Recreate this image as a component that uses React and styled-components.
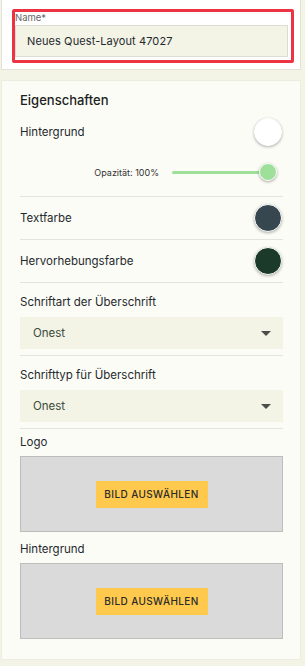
import React from "react";
import styled, { createGlobalStyle } from "styled-components";

const GlobalStyle = createGlobalStyle`
  body {
    margin: 0;
    background: #f3f3e6;
    font-family: "Inter", "Noto Sans", sans-serif;
    color: #1f2a2e;
  }
`;

const Page = styled.div`
  width: 300px;
  margin-left: 1px;
  display: flex;
  flex-direction: column;
  gap: 10px;
  padding-bottom: 8px;
`;

const NameCard = styled.div`
  background: #ffffff;
  border: 1px solid #e2e2da;
  border-top: none;
  padding: 9px 6px 6px 10px;
`;

const Highlight = styled.div`
  border: 3px solid #ec3344;
  border-radius: 2px;
  padding: 0 3px 3px 0;
`;

const FieldLabel = styled.div`
  font-size: 9.5px;
  color: #666;
  line-height: 12px;
  margin-bottom: 1px;
`;

const NameInput = styled.div`
  background: #f3f3e6;
  border: 1px solid #dcdcd2;
  height: 30px;
  display: flex;
  align-items: center;
  padding-left: 11px;
  font-size: 11px;
  letter-spacing: 0.1px;
  color: #1f2a2e;
`;

const PropsCard = styled.div`
  background: #fcfcf6;
  border: 1px solid #ecece0;
  padding: 11px 17px 20px 18px;
`;

const Title = styled.div`
  font-size: 13px;
  font-weight: 500;
  line-height: 16px;
  color: #1b1f22;
  margin-bottom: 10px;
`;

const Row = styled.div`
  display: flex;
  align-items: center;
  justify-content: space-between;
  height: ${(p) => p.h || 42}px;
  border-bottom: ${(p) => (p.noLine ? "none" : "1px solid #e4e4dc")};
`;

const Label = styled.div`
  font-size: 11.5px;
  line-height: 14px;
  color: #1f2a2e;
`;

const Swatch = styled.div`
  width: 26px;
  height: 26px;
  border-radius: 50%;
  background: ${(p) => p.color};
  border: 1.5px solid #ffffff;
  box-shadow: 0 1px 3px rgba(0, 0, 0, 0.3);
  margin-right: 1px;
`;

const OpacityRow = styled.div`
  display: flex;
  align-items: center;
  justify-content: flex-end;
  gap: 13px;
  height: 48px;
  padding-top: 2px;
  border-bottom: 1px solid #e4e4dc;
`;

const OpacityText = styled.span`
  font-size: 9px;
  color: #333;
`;

const Track = styled.div`
  position: relative;
  width: 96px;
  height: 3px;
  background: #9ee09a;
  border-radius: 2px;
  margin-right: 15px;
`;

const Thumb = styled.div`
  position: absolute;
  right: -9px;
  top: -8px;
  width: 16px;
  height: 16px;
  border-radius: 50%;
  background: #9ee09a;
  border: 1.5px solid #ffffff;
  box-shadow: 0 1px 3px rgba(0, 0, 0, 0.35);
`;

const Group = styled.div`
  padding: ${(p) => p.pad || "12px 0 6px"};
  border-bottom: ${(p) => (p.noLine ? "none" : "1px solid #e4e4dc")};
`;

const GroupLabel = styled(Label)`
  margin-bottom: ${(p) => p.gap || 8}px;
`;

const Select = styled.div`
  background: #f3f3e6;
  height: 32px;
  display: flex;
  align-items: center;
  justify-content: space-between;
  padding: 0 12px 0 13px;
  font-size: 11.5px;
  color: #3b4b3c;
`;

const Caret = styled.span`
  width: 0;
  height: 0;
  border-left: 5px solid transparent;
  border-right: 5px solid transparent;
  border-top: 5px solid #4a4f4a;
`;

const ImageBox = styled.div`
  background: #dadada;
  border: 1px solid #bdbdbd;
  height: 74px;
  display: flex;
  align-items: center;
  justify-content: center;
`;

const PickButton = styled.button`
  background: #ffc94e;
  border: none;
  width: 112px;
  height: 27px;
  font-family: inherit;
  font-size: 10px;
  font-weight: 500;
  letter-spacing: 0.4px;
  color: #2b2b2b;
  padding: 0;
`;

export default function App() {
  return (
    <>
      <GlobalStyle />
      <Page>
        <NameCard>
          <Highlight>
            <FieldLabel>Name*</FieldLabel>
            <NameInput>Neues Quest-Layout 47027</NameInput>
          </Highlight>
        </NameCard>
        <PropsCard>
          <Title>Eigenschaften</Title>
          <Row h={28} noLine>
            <Label>Hintergrund</Label>
            <Swatch color="#ffffff" />
          </Row>
          <OpacityRow>
            <OpacityText>Opazität: 100%</OpacityText>
            <Track>
              <Thumb />
            </Track>
          </OpacityRow>
          <Row h={42}>
            <Label>Textfarbe</Label>
            <Swatch color="#37474f" />
          </Row>
          <Row h={42}>
            <Label>Hervorhebungsfarbe</Label>
            <Swatch color="#1c3a2a" />
          </Row>
          <Group>
            <GroupLabel>Schriftart der Überschrift</GroupLabel>
            <Select>
              Onest
              <Caret />
            </Select>
          </Group>
          <Group>
            <GroupLabel>Schrifttyp für Überschrift</GroupLabel>
            <Select>
              Onest
              <Caret />
            </Select>
          </Group>
          <Group pad="6px 0 0" noLine>
            <GroupLabel gap={7}>Logo</GroupLabel>
            <ImageBox>
              <PickButton>BILD AUSWÄHLEN</PickButton>
            </ImageBox>
          </Group>
          <Group pad="10px 0 0" noLine>
            <GroupLabel gap={7}>Hintergrund</GroupLabel>
            <ImageBox>
              <PickButton>BILD AUSWÄHLEN</PickButton>
            </ImageBox>
          </Group>
        </PropsCard>
      </Page>
    </>
  );
}
